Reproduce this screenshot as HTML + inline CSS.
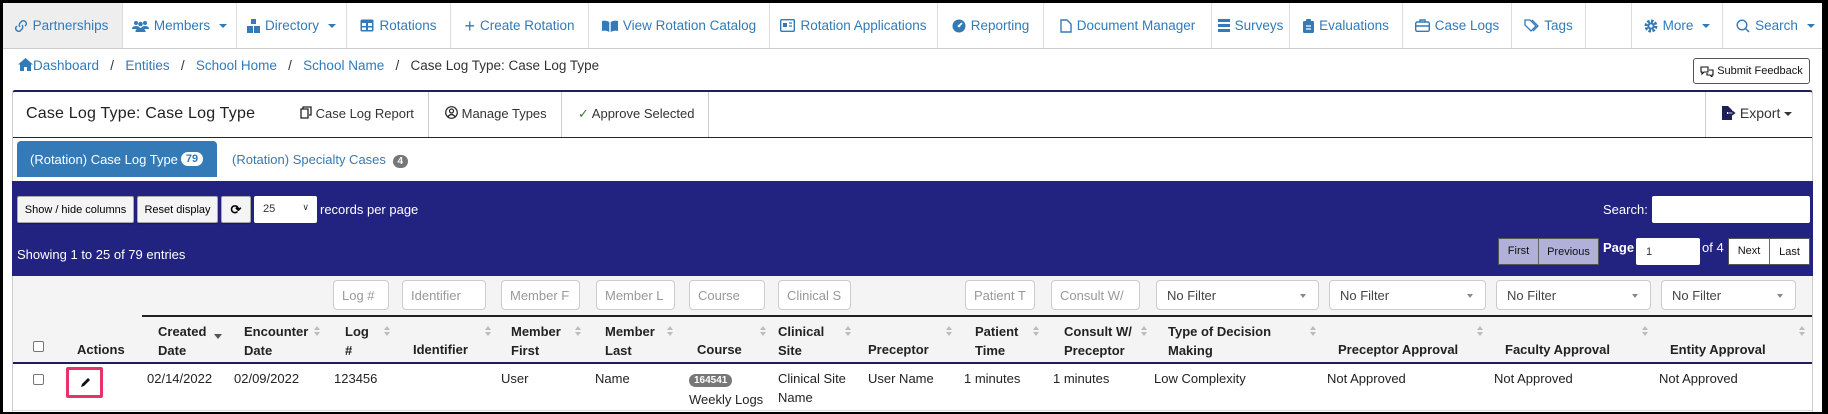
<!DOCTYPE html>
<html><head><meta charset="utf-8"><style>
*{box-sizing:border-box;margin:0;padding:0}
body{width:1828px;height:414px;overflow:hidden;background:#fff;font-family:"Liberation Sans",Arial,sans-serif;font-size:14px;color:#333;position:relative}
#pg{position:absolute;left:0;top:0;width:1828px;height:414px;background:#fff;overflow:hidden}
.a{position:absolute;white-space:nowrap}
.nav{position:absolute;left:0;top:0;height:49px;width:1828px;border-bottom:1px solid #ccc;background:#fff}
.nc{position:absolute;top:0;height:48px;border-right:1px solid #ddd;color:#337ab7;font-size:13.5px;display:flex;align-items:center;justify-content:center;padding-top:3px;gap:5px}
.car{display:inline-block;border-left:4px solid transparent;border-right:4px solid transparent;border-top:4px solid #337ab7;margin-left:4px;vertical-align:middle}
.lnk{color:#337ab7}
.btn{position:absolute;background:#f4f4f4;border:1px solid #aaa;border-radius:2px;font-size:11px;color:#000;display:flex;align-items:center;justify-content:center;box-shadow:0 1px 1px rgba(0,0,0,.3)}
.fi{position:absolute;top:280px;height:30px;border:1px solid #ccc;border-radius:4px;background:#fff;color:#999;font-size:13px;padding-left:8px;display:flex;align-items:center;overflow:hidden}
.sel{position:absolute;top:280px;height:30px;border:1px solid #ccc;border-radius:4px;background:#fff;color:#444;font-size:13px;padding-left:10px;display:flex;align-items:center}
.sel:after{content:"";position:absolute;right:12px;top:13px;border-left:3px solid transparent;border-right:3px solid transparent;border-top:4px solid #888}
.th{position:absolute;font-weight:bold;font-size:13px;color:#222;line-height:19px}
.sa{position:absolute;width:7px;height:12px}
.sa:before{content:"";position:absolute;left:0;top:0;border-left:3.5px solid transparent;border-right:3.5px solid transparent;border-bottom:4px solid #bbb}
.sa:after{content:"";position:absolute;left:0;top:6px;border-left:3.5px solid transparent;border-right:3.5px solid transparent;border-top:4px solid #bbb}
.td{position:absolute;top:369px;font-size:13px;color:#222;line-height:19px}
.cb{position:absolute;width:11px;height:11px;border:1px solid #777;border-radius:2px;background:#fff}
</style></head><body><div id="pg">
<div class="nav">
 <div class="nc" style="left:0;width:123px;background:#eee">
  <svg width="14" height="14" viewBox="0 0 14 14"><g fill="none" stroke="#337ab7" stroke-width="1.4"><path d="M6 8a3 3 0 0 1 0-4l2-2a3 3 0 0 1 4 4l-1 1"/><path d="M8 6a3 3 0 0 1 0 4l-2 2a3 3 0 0 1-4-4l1-1"/></g></svg>Partnerships</div>
 <div class="nc" style="left:123px;width:114px"><svg width="17" height="12" viewBox="0 0 17 12" fill="#337ab7"><circle cx="4" cy="3" r="2"/><circle cx="13" cy="3" r="2"/><circle cx="8.5" cy="4" r="2.3"/><path d="M0 9q0-3 4-3t4 3zM9 9q0-3 4-3t4 3zM3.5 12q0-4 5-4t5 4z"/></svg>Members<span class="car"></span></div>
 <div class="nc" style="left:237px;width:110px"><svg width="13" height="14" viewBox="0 0 13 14" fill="#337ab7"><rect x="4" y="0" width="5" height="5"/><rect x="0" y="7" width="6" height="7"/><rect x="7" y="7" width="6" height="7"/></svg>Directory<span class="car"></span></div>
 <div class="nc" style="left:347px;width:104px"><svg width="14" height="13" viewBox="0 0 14 13"><rect x="0.5" y="0.5" width="13" height="12" rx="1.5" fill="#337ab7"/><path d="M2 4h4v3H2zM8 4h4v3H8zM2 8.5h4v2.5H2zM8 8.5h4v2.5H8z" fill="#fff"/></svg>Rotations</div>
 <div class="nc" style="left:451px;width:138px"><span style="font-size:18px;line-height:14px">+</span>Create Rotation</div>
 <div class="nc" style="left:589px;width:181px"><svg width="16" height="12" viewBox="0 0 16 12" fill="#337ab7"><path d="M0 1q4-1 7.3 1v10Q4 10 0 11zM16 1q-4-1-7.3 1v10q3.3-2 7.3-1z"/></svg>View Rotation Catalog</div>
 <div class="nc" style="left:770px;width:168px"><svg width="15" height="13" viewBox="0 0 15 13"><rect x="0.7" y="0.7" width="13.6" height="11.6" rx="1" fill="none" stroke="#337ab7" stroke-width="1.4"/><rect x="3" y="4" width="4" height="4" fill="#337ab7"/><path d="M9 4h3M9 7h3" stroke="#337ab7" stroke-width="1.3"/></svg>Rotation Applications</div>
 <div class="nc" style="left:938px;width:106px"><svg width="14" height="14" viewBox="0 0 14 14"><circle cx="7" cy="7" r="6.5" fill="#337ab7"/><path d="M7 7l3-3" stroke="#fff" stroke-width="1.6"/><circle cx="7" cy="7" r="1.3" fill="#fff"/></svg>Reporting</div>
 <div class="nc" style="left:1044px;width:168px"><svg width="12" height="14" viewBox="0 0 12 14"><path d="M1 1h6l4 4v8H1z" fill="none" stroke="#337ab7" stroke-width="1.4"/></svg>Document Manager</div>
 <div class="nc" style="left:1212px;width:78px"><svg width="12" height="13" viewBox="0 0 12 13" fill="#337ab7"><rect y="0" width="12" height="3"/><rect y="5" width="12" height="3"/><rect y="10" width="12" height="3"/></svg>Surveys</div>
 <div class="nc" style="left:1290px;width:113px"><svg width="11" height="14" viewBox="0 0 11 14"><rect x="0" y="2" width="11" height="12" rx="1.5" fill="#337ab7"/><rect x="3" y="0" width="5" height="3" rx="1" fill="#337ab7"/><path d="M3 7h5M3 10h5" stroke="#fff" stroke-width="1.3"/></svg>Evaluations</div>
 <div class="nc" style="left:1403px;width:109px"><svg width="15" height="13" viewBox="0 0 15 13"><rect x="0.7" y="3" width="13.6" height="9.3" rx="1.5" fill="none" stroke="#337ab7" stroke-width="1.4"/><path d="M5 3V1h5v2M1 7h13" fill="none" stroke="#337ab7" stroke-width="1.4"/></svg>Case Logs</div>
 <div class="nc" style="left:1512px;width:74px"><svg width="15" height="13" viewBox="0 0 15 13"><path d="M1 1h5l6 6-5 5-6-6z" fill="none" stroke="#337ab7" stroke-width="1.3"/><path d="M8 1l6 6-5 5" fill="none" stroke="#337ab7" stroke-width="1.3"/></svg>Tags</div>
 <div class="nc" style="left:1586px;width:46px"></div>
 <div class="nc" style="left:1632px;width:91px"><svg width="14" height="14" viewBox="0 0 14 14"><circle cx="7" cy="7" r="5" fill="none" stroke="#337ab7" stroke-width="3" stroke-dasharray="2.5 1.4"/><circle cx="7" cy="7" r="3.6" fill="#337ab7"/><circle cx="7" cy="7" r="1.6" fill="#fff"/></svg>More<span class="car"></span></div>
 <div class="nc" style="left:1723px;width:105px;border-right:none"><svg width="14" height="14" viewBox="0 0 14 14"><circle cx="6" cy="6" r="4.8" fill="none" stroke="#337ab7" stroke-width="1.4"/><path d="M9.5 9.5L13 13" stroke="#337ab7" stroke-width="1.5"/></svg>Search<span class="car"></span></div>
</div>

<div class="a" style="left:18px;top:58px;font-size:13.5px">
 <svg width="15" height="13" viewBox="0 0 15 13" style="vertical-align:-1px"><path d="M7.5 0L0 6.5h2V13h4V9h3v4h4V6.5h2z" fill="#337ab7"/></svg><span class="lnk">Dashboard</span>&nbsp;&nbsp; / &nbsp;&nbsp;<span class="lnk">Entities</span>&nbsp;&nbsp; / &nbsp;&nbsp;<span class="lnk">School Home</span>&nbsp;&nbsp; / &nbsp;&nbsp;<span class="lnk">School Name</span>&nbsp;&nbsp; / &nbsp;&nbsp;<span>Case Log Type: Case Log Type</span></div>
<div class="a" style="left:1693px;top:58px;width:117px;height:26px;border:1px solid #555;border-radius:3px;font-size:11px;color:#111;display:flex;align-items:center;justify-content:center;gap:3px">
 <svg width="14" height="11" viewBox="0 0 14 11"><path d="M1 1h7v5H4L2 8V6H1z M9 4h4v5h-1v2l-2-2H7V7" fill="none" stroke="#111" stroke-width="1.1"/></svg>Submit Feedback</div>

<div class="a" style="left:12px;top:90px;width:1801px;height:330px;border:1px solid #ccc;border-top:2px solid #1e1e5a;border-radius:3px 3px 0 0"></div>
<div class="a" style="left:13px;top:137px;width:1799px;height:1px;background:#1e1e5a"></div>
<div class="a" style="left:26px;top:105px;font-size:16px;color:#222;font-weight:500;letter-spacing:.2px">Case Log Type: Case Log Type</div>
<div class="a" style="left:300px;top:106px;font-size:13px"><svg width="12" height="13" viewBox="0 0 12 13" style="vertical-align:-1px"><path d="M3 3V1h8v8H9M1 3h7v9H1z" fill="none" stroke="#222" stroke-width="1.3"/></svg> Case Log Report</div>
<div class="a" style="left:428px;top:92px;width:1px;height:45px;background:#ccc"></div>
<div class="a" style="left:445px;top:106px;font-size:13px"><svg width="13" height="13" viewBox="0 0 13 13" style="vertical-align:-1px"><circle cx="6.5" cy="6.5" r="5.8" fill="none" stroke="#222" stroke-width="1.2"/><circle cx="6.5" cy="5" r="2" fill="none" stroke="#222" stroke-width="1.2"/><path d="M3 10.5q3.5-4 7 0" fill="none" stroke="#222" stroke-width="1.2"/></svg> Manage Types</div>
<div class="a" style="left:561px;top:92px;width:1px;height:45px;background:#ccc"></div>
<div class="a" style="left:578px;top:106px;font-size:13px"><span style="color:#3a7a3a">✓</span> Approve Selected</div>
<div class="a" style="left:708px;top:92px;width:1px;height:45px;background:#ccc"></div>
<div class="a" style="left:1705px;top:92px;width:1px;height:45px;background:#ccc"></div>
<div class="a" style="left:1722px;top:105px;font-size:14px"><svg width="14" height="14" viewBox="0 0 14 14" style="vertical-align:-2px"><path d="M0 0h6l4 4v2H5v2h5v6H0z" fill="#1e1e5a"/><path d="M6 7h6M10 5l2.5 2L10 9" fill="none" stroke="#1e1e5a" stroke-width="1.3"/></svg> Export<span class="car" style="border-top-color:#333"></span></div>

<div class="a" style="left:17px;top:141px;width:200px;height:36px;background:#337ab7;border-radius:4px 4px 0 0;color:#fff;font-size:13px;display:flex;align-items:center;padding-left:13px">(Rotation) Case Log Type <span style="background:#fff;color:#337ab7;border-radius:8px;font-size:11px;font-weight:bold;padding:1px 5px;margin-left:3px">79</span></div>
<div class="a" style="left:232px;top:152px;color:#337ab7;font-size:13px">(Rotation) Specialty Cases <span style="background:#777;color:#fff;border-radius:8px;font-size:10px;font-weight:bold;padding:1px 5px;margin-left:3px">4</span></div>

<div class="a" style="left:12px;top:181px;width:1801px;height:95px;background:#222281"></div>
<div class="btn" style="left:17px;top:196px;width:117px;height:27px">Show / hide columns</div>
<div class="btn" style="left:137px;top:196px;width:81px;height:27px">Reset display</div>
<div class="btn" style="left:221px;top:196px;width:30px;height:27px;font-size:13px;font-weight:bold">⟳</div>
<div class="a" style="left:254px;top:196px;width:63px;height:27px;background:#fff;border-radius:2px;font-size:11px;color:#333;padding:7px 0 0 9px">25<span style="position:absolute;right:8px;top:6px;font-size:9px">&#x2228;</span></div>
<div class="a" style="left:320px;top:202px;color:#fff;font-size:13px">records per page</div>
<div class="a" style="left:1603px;top:202px;color:#fff;font-size:13px">Search:</div>
<div class="a" style="left:1652px;top:196px;width:158px;height:27px;background:#fff;border-radius:2px"></div>
<div class="a" style="left:17px;top:247px;color:#fff;font-size:13px">Showing 1 to 25 of 79 entries</div>
<div class="a" style="left:1498px;top:238px;width:101px;height:27px;background:#b0b0d8;border:1px solid #555;font-size:11px;color:#111;display:flex;align-items:center"><span style="width:40px;text-align:center;border-right:1px solid #666;line-height:25px">First</span><span style="flex:1;text-align:center">Previous</span></div>
<div class="a" style="left:1603px;top:240px;color:#fff;font-size:13px;font-weight:bold">Page</div>
<div class="a" style="left:1636px;top:238px;width:64px;height:27px;background:#fff;border-radius:2px;font-size:11px;padding:8px 0 0 10px">1</div>
<div class="a" style="left:1702px;top:240px;color:#fff;font-size:13px">of 4</div>
<div class="a" style="left:1728px;top:238px;width:82px;height:27px;background:#fff;border:1px solid #555;font-size:11px;color:#111;display:flex;align-items:center"><span style="width:41px;text-align:center;border-right:1px solid #666;line-height:25px">Next</span><span style="flex:1;text-align:center">Last</span></div>

<div class="a" style="left:13px;top:276px;width:1799px;height:87px;background:#f4f4f4"></div>
<div class="fi" style="left:333px;width:56px">Log #</div>
<div class="fi" style="left:402px;width:84px">Identifier</div>
<div class="fi" style="left:501px;width:79px">Member F</div>
<div class="fi" style="left:596px;width:79px">Member L</div>
<div class="fi" style="left:689px;width:76px">Course</div>
<div class="fi" style="left:778px;width:73px">Clinical S</div>
<div class="fi" style="left:965px;width:70px">Patient T</div>
<div class="fi" style="left:1051px;width:89px">Consult W/</div>
<div class="sel" style="left:1156px;width:163px">No Filter</div>
<div class="sel" style="left:1329px;width:157px">No Filter</div>
<div class="sel" style="left:1496px;width:155px">No Filter</div>
<div class="sel" style="left:1661px;width:135px">No Filter</div>
<div class="a" style="left:142px;top:315px;width:1670px;height:2px;background:#222"></div>
<div class="a" style="left:13px;top:362px;width:1799px;height:2px;background:#1e1e5a"></div>

<div class="cb" style="left:33px;top:341px"></div>
<div class="th" style="left:77px;top:340px">Actions</div>
<div class="th" style="left:158px;top:322px">Created<br>Date</div><div class="a" style="left:214px;top:334px;border-left:4px solid transparent;border-right:4px solid transparent;border-top:5px solid #555"></div>
<div class="th" style="left:244px;top:322px">Encounter<br>Date</div><div class="sa" style="left:314px;top:326px"></div>
<div class="th" style="left:345px;top:322px">Log<br>#</div><div class="sa" style="left:384px;top:326px"></div>
<div class="th" style="left:413px;top:340px">Identifier</div><div class="sa" style="left:485px;top:326px"></div>
<div class="th" style="left:511px;top:322px">Member<br>First</div><div class="sa" style="left:575px;top:326px"></div>
<div class="th" style="left:605px;top:322px">Member<br>Last</div><div class="sa" style="left:667px;top:326px"></div>
<div class="th" style="left:697px;top:340px">Course</div><div class="sa" style="left:760px;top:326px"></div>
<div class="th" style="left:778px;top:322px">Clinical<br>Site</div><div class="sa" style="left:845px;top:326px"></div>
<div class="th" style="left:868px;top:340px">Preceptor</div><div class="sa" style="left:946px;top:326px"></div>
<div class="th" style="left:975px;top:322px">Patient<br>Time</div><div class="sa" style="left:1033px;top:326px"></div>
<div class="th" style="left:1064px;top:322px">Consult W/<br>Preceptor</div><div class="sa" style="left:1141px;top:326px"></div>
<div class="th" style="left:1168px;top:322px">Type of Decision<br>Making</div><div class="sa" style="left:1310px;top:326px"></div>
<div class="th" style="left:1338px;top:340px">Preceptor Approval</div><div class="sa" style="left:1477px;top:326px"></div>
<div class="th" style="left:1505px;top:340px">Faculty Approval</div><div class="sa" style="left:1642px;top:326px"></div>
<div class="th" style="left:1670px;top:340px">Entity Approval</div><div class="sa" style="left:1799px;top:326px"></div>

<div class="cb" style="left:33px;top:374px"></div>
<div class="a" style="left:66px;top:367px;width:37px;height:31px;border:3px solid #e8336a;border-radius:2px;background:#fff;display:flex;align-items:center;justify-content:center"><svg width="12" height="12" viewBox="0 0 12 12"><path d="M2 10l1-3 6-6 2 2-6 6z" fill="#111"/></svg></div>
<div class="td" style="left:147px">02/14/2022</div>
<div class="td" style="left:234px">02/09/2022</div>
<div class="td" style="left:334px">123456</div>
<div class="td" style="left:501px">User</div>
<div class="td" style="left:595px">Name</div>
<div class="td" style="left:689px"><span style="background:#777;color:#fff;border-radius:8px;font-size:10px;font-weight:bold;padding:1px 5px">164541</span><br>Weekly Logs</div>
<div class="td" style="left:778px">Clinical Site<br>Name</div>
<div class="td" style="left:868px">User Name</div>
<div class="td" style="left:964px">1 minutes</div>
<div class="td" style="left:1053px">1 minutes</div>
<div class="td" style="left:1154px">Low Complexity</div>
<div class="td" style="left:1327px">Not Approved</div>
<div class="td" style="left:1494px">Not Approved</div>
<div class="td" style="left:1659px">Not Approved</div>
<div class="a" style="left:13px;top:410px;width:1799px;height:1px;background:#ddd"></div>

<div class="a" style="left:0;top:0;width:1828px;height:3px;background:#000"></div>
<div class="a" style="left:0;top:0;width:3px;height:414px;background:#000"></div>
<div class="a" style="left:1822px;top:0;width:6px;height:414px;background:#000"></div>
<div class="a" style="left:0;top:412px;width:1828px;height:2px;background:#000"></div>
</div></body></html>
